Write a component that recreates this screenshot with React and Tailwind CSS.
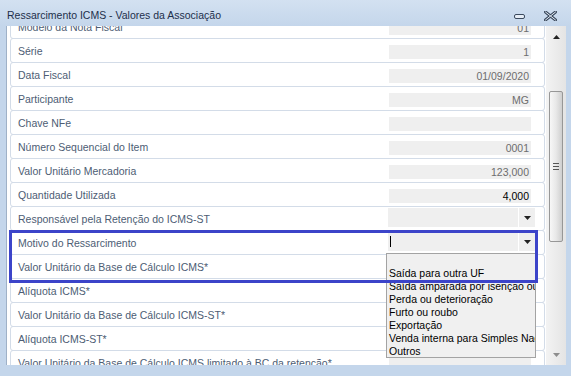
import React from "react";

const rows = [
  { label: "Modelo da Nota Fiscal", value: "01" },
  { label: "Série", value: "1" },
  { label: "Data Fiscal", value: "01/09/2020" },
  { label: "Participante", value: "MG" },
  { label: "Chave NFe", value: "" },
  { label: "Número Sequencial do Item", value: "0001" },
  { label: "Valor Unitário Mercadoria", value: "123,000" },
  { label: "Quantidade Utilizada", value: "4,000", dark: true },
  { label: "Responsável pela Retenção do ICMS-ST", combo: true },
  { label: "Motivo do Ressarcimento", combo: true, caret: true },
  { label: "Valor Unitário da Base de Cálculo ICMS*", value: "" },
  { label: "Alíquota ICMS*", value: "" },
  { label: "Valor Unitário da Base de Cálculo ICMS-ST*", value: "" },
  { label: "Alíquota ICMS-ST*", value: "" },
  { label: "Valor Unitário da Base de Cálculo ICMS limitado à BC da retenção*", value: "" },
];

const options = [
  "",
  "Saída para outra UF",
  "Saída amparada por isenção ou não incidência",
  "Perda ou deterioração",
  "Furto ou roubo",
  "Exportação",
  "Venda interna para Simples Nacional",
  "Outros",
];

function DownArrow({ color = "#222" }) {
  return (
    <svg width="7" height="4" viewBox="0 0 7 4">
      <path d="M0 0h7L3.5 4z" fill={color} />
    </svg>
  );
}

function Row({ row }) {
  return (
    <div className="h-[25px] -mb-px border border-[#d3dce8] rounded-[3px] flex items-start">
      <span className="self-center pl-[7px] leading-[14px] text-[#4d5d74] whitespace-nowrap">
        {row.label}
      </span>
      {row.combo ? (
        <div className="ml-auto mr-[9px] mt-[1px] w-[147px] h-[19px] bg-[#efefef] flex">
          <div className="flex-1 flex items-center pl-[2px]">
            {row.caret && <div className="w-px h-[11px] bg-black" />}
          </div>
          <div className="w-[17px] border-l border-white flex items-center justify-center">
            <DownArrow />
          </div>
        </div>
      ) : (
        <div
          className={`ml-auto mr-[13px] mt-[6px] w-[142px] h-[14px] bg-[#efefef] text-right pr-[2px] leading-[15px] ${
            row.dark ? "text-black" : "text-[#6d6d6d]"
          }`}
        >
          {row.value}
        </div>
      )}
    </div>
  );
}

export default function App() {
  return (
    <div className="relative w-[571px] h-[376px] overflow-hidden bg-[#c4d6eb] flex flex-col font-['Liberation_Sans',Arial,sans-serif] text-[10.5px]">
      {/* title bar */}
      <div className="shrink-0 h-[26px] flex items-center pt-[6px] pl-[7px] bg-gradient-to-b from-[#d3e1f1] to-[#c4d6eb]">
        <span className="text-[#1d2f4b] text-[10.5px]">
          Ressarcimento ICMS - Valores da Associação
        </span>
        <div className="ml-auto flex items-center gap-[19px] mr-[14px]">
          <div className="w-[11px] h-[5px] border border-[#3b4a5e] rounded-[2px] bg-[#e6edf6]" />
          <svg width="13" height="10" viewBox="0 0 13 10">
            <path d="M1.5 1l10 8M11.5 1l-10 8" stroke="#3b4a5e" strokeWidth="3" strokeLinecap="round" />
            <path d="M1.5 1l10 8M11.5 1l-10 8" stroke="#e6edf6" strokeWidth="1" strokeLinecap="round" />
          </svg>
        </div>
      </div>

      {/* body */}
      <div className="flex-1 min-h-0 ml-[6px] mr-[5px] mb-[11px] flex border-l border-[#9fb1c7]">
        <div className="w-[539px] bg-white overflow-hidden pl-[3px] pr-px">
          <div className="-mt-[12px]">
            {rows.map((r) => (
              <Row key={r.label} row={r} />
            ))}
          </div>
        </div>

        {/* scrollbar */}
        <div className="w-[20px] bg-gradient-to-r from-[#f3f3f3] to-[#e4e4e4] flex flex-col">
          <div className="h-[22px] flex items-center justify-center">
            <svg width="7" height="4" viewBox="0 0 7 4">
              <path d="M3.5 0L7 4H0z" fill="#222" />
            </svg>
          </div>
          <div className="flex-1">
            <div className="mt-[43px] ml-[3px] w-[14px] h-[151px] border border-[#979797] rounded-[2px] bg-gradient-to-r from-[#f7f7f7] via-[#e8e8e8] to-[#cfcfcf] flex flex-col items-center justify-center gap-[2px]">
              <div className="w-[6px] h-px bg-[#555]" />
              <div className="w-[6px] h-px bg-[#555]" />
              <div className="w-[6px] h-px bg-[#555]" />
            </div>
          </div>
          <div className="h-[12px] flex items-start justify-center">
            <DownArrow color="#8d8d8d" />
          </div>
        </div>
      </div>

      {/* open dropdown list */}
      <div className="absolute left-[386px] top-[253px] w-[150px] h-[105px] border border-[#a3a3a3] bg-[#f0f0f0] overflow-hidden">
        {options.map((o, i) => (
          <div key={i} className="h-[13px] leading-[13px] pl-[2px] text-black whitespace-nowrap text-[10.5px]">
            {o}
          </div>
        ))}
      </div>

      {/* highlight frame */}
      <div className="absolute left-[9px] top-[230px] w-[529px] h-[53px] border-[3px] border-[#3c44c9]" />
    </div>
  );
}
